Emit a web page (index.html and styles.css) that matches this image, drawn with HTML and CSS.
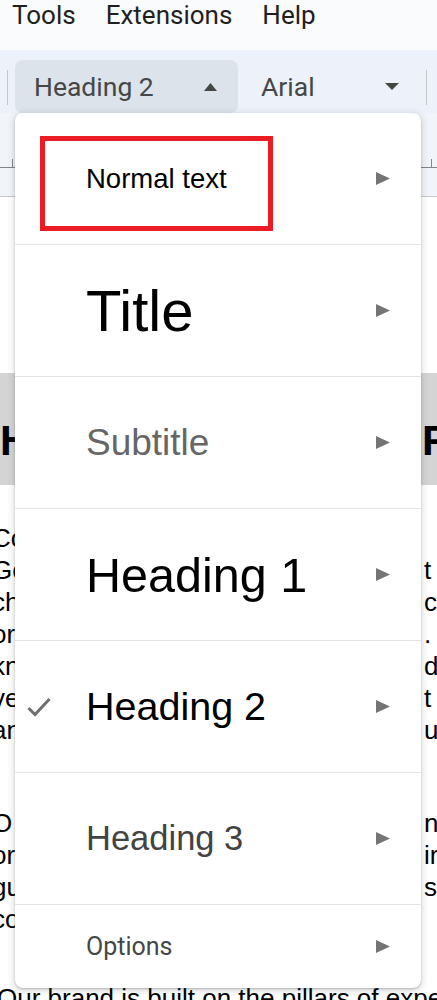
FILE: index.html
```html
<!DOCTYPE html>
<html lang="en">
<head>
<meta charset="utf-8">
<title>Docs styles menu</title>
<link rel="stylesheet" href="styles.css">
</head>
<body>
<div class="menubar"><span>Tools</span><span>Extensions</span><span>Help</span></div>
<div class="toolbar">
  <span class="sep"></span>
  <div class="style-btn"><span>Heading 2</span><svg class="tri" width="13" height="8" viewBox="0 0 13 8"><polygon points="0,8 6.5,0 13,8" fill="#444746"/></svg></div>
  <div class="font-btn"><span>Arial</span><svg class="tri" width="14" height="7" viewBox="0 0 14 7"><polygon points="0,0 14,0 7,7" fill="#444746"/></svg></div>
  <span class="sep"></span>
</div>
<div class="ruler"><div class="ticks"><i></i><i></i></div></div>
<div class="doc">
  <div class="band row"><span class="l">How We Present Ourselves</span><span class="r">F</span></div>
  <div class="para p1">
    <div class="row"><span class="l">Consistency in how we communicate matters.</span><span class="r"></span></div>
    <div class="row"><span class="l">Good communication builds trust and lets us reach</span><span class="r">t</span></div>
    <div class="row"><span class="l">choosing the right words for each audience we reach</span><span class="r">ch</span></div>
    <div class="row"><span class="l">or partner, every single time we speak to them.</span><span class="r">.</span></div>
    <div class="row"><span class="l">known and respected for clear, helpful and kind</span><span class="r">d</span></div>
    <div class="row"><span class="l">very same voice in every channel and every place that</span><span class="r">t</span></div>
    <div class="row"><span class="l">and format we use to share our work with you</span><span class="r">u</span></div>
  </div>
  <div class="para p2">
    <div class="row"><span class="l">O ur guidelines describe the tone we use when we plan</span><span class="r">n</span></div>
    <div class="row"><span class="l">or write content, from short notes to longer third</span><span class="r">ir</span></div>
    <div class="row"><span class="l">guides, so that our readers always find answers</span><span class="r">s</span></div>
    <div class="row"><span class="l">consistent and easy to follow.</span><span class="r"></span></div>
  </div>
  <div class="para p3">
    <div class="row"><span class="full">Our brand is built on the pillars of expertise and care.</span></div>
  </div>
</div>

<div class="menu">
  <div class="item">
    <span class="chk"></span><span class="label normal">Normal text</span>
    <svg class="arrow" width="14" height="13" viewBox="0 0 14 13"><polygon points="0,0 14,6.5 0,13" fill="#757575"/></svg>
    <span class="mark"></span>
  </div>
  <div class="item">
    <span class="chk"></span><span class="label title">Title</span>
    <svg class="arrow" width="14" height="13" viewBox="0 0 14 13"><polygon points="0,0 14,6.5 0,13" fill="#757575"/></svg>
  </div>
  <div class="item">
    <span class="chk"></span><span class="label subtitle">Subtitle</span>
    <svg class="arrow" width="14" height="13" viewBox="0 0 14 13"><polygon points="0,0 14,6.5 0,13" fill="#757575"/></svg>
  </div>
  <div class="item">
    <span class="chk"></span><span class="label h1">Heading 1</span>
    <svg class="arrow" width="14" height="13" viewBox="0 0 14 13"><polygon points="0,0 14,6.5 0,13" fill="#757575"/></svg>
  </div>
  <div class="item">
    <span class="chk"><svg width="24" height="20" viewBox="0 0 24 20"><polyline points="1.5,11 8,17.5 22.5,2" fill="none" stroke="#6f6f6f" stroke-width="3"/></svg></span><span class="label h2">Heading 2</span>
    <svg class="arrow" width="14" height="13" viewBox="0 0 14 13"><polygon points="0,0 14,6.5 0,13" fill="#757575"/></svg>
  </div>
  <div class="item">
    <span class="chk"></span><span class="label h3">Heading 3</span>
    <svg class="arrow" width="14" height="13" viewBox="0 0 14 13"><polygon points="0,0 14,6.5 0,13" fill="#757575"/></svg>
  </div>
  <div class="item opt">
    <span class="chk"></span><span class="label options">Options</span>
    <svg class="arrow" width="14" height="13" viewBox="0 0 14 13"><polygon points="0,0 14,6.5 0,13" fill="#757575"/></svg>
  </div>
</div>
</body>
</html>
```
FILE: styles.css
```css
* { box-sizing: border-box; }
html, body { margin: 0; padding: 0; height: 1000px; overflow: hidden; }
body {
  width: 437px;
  position: relative;
  background: #fff;
  font-family: Roboto, "Liberation Sans", Arial, sans-serif;
}

.menubar {
  height: 50px;
  background: #f9fbfd;
  display: flex;
  gap: 30px;
  padding-left: 12px;
  font-size: 26px;
  line-height: 30px;
  color: #1f1f1f;
}

.toolbar {
  height: 63px;
  background: #edf2fa;
  display: flex;
  padding: 10px 0 0 7px;
}
.sep {
  width: 1px;
  height: 35px;
  margin-top: 10px;
  background: #c4c7c5;
  flex: none;
}
.style-btn, .font-btn {
  height: 53px;
  display: flex;
  align-items: center;
  justify-content: space-between;
  font-size: 26.5px;
  color: #444746;
  flex: none;
}
.style-btn {
  margin-left: 7px;
  width: 223px;
  background: #dde3ea;
  border-radius: 8px;
  padding: 0 21px 0 19px;
}
.font-btn {
  width: 188px;
  padding: 0 27px 0 23px;
}
.tri { display: block; }

.ruler {
  height: 84px;
  background: #f1f4f9;
  border-bottom: 1px solid #c7c7c7;
  padding-top: 46px;
}
.ticks {
  display: flex;
  justify-content: space-between;
  padding: 0 5px 0 12px;
  height: 9px;
  border-bottom: 1px solid #80868b;
}
.ticks i { width: 1px; height: 8px; background: #80868b; display: block; }

.doc {
  padding-top: 176px;
  font-family: "Liberation Sans", Arial, sans-serif;
  color: #000;
}
.row {
  display: flex;
  white-space: nowrap;
  overflow: hidden;
  margin-left: -3px;
  width: 440px;
}
.row .l { width: 423px; flex: none; overflow: hidden; }
.row .r { flex: none; padding-left: 4px; }
.p1 .row, .p2 .row { margin-left: -8px; width: 445px; }
.p1 .row .l, .p2 .row .l { width: 428px; }
.band {
  height: 112px;
  background: #d4d4d4;
  padding-top: 47px;
  font-size: 42px;
  line-height: 42px;
  font-weight: bold;
  margin-left: 0;
  width: 437px;
}
.band .l { width: 420px; }
.band .r { padding-left: 2px; }
.para { font-size: 26px; line-height: 32px; }
.p1 { margin-top: 37px; }
.p2 { margin-top: 61px; }
.p3 { margin-top: 47px; }

.menu {
  position: absolute;
  top: 113px;
  left: 15px;
  width: 406px;
  height: 875px;
  background: #fff;
  border-radius: 8px;
  box-shadow: 0 2px 6px 2px rgba(60, 64, 67, 0.15), 0 1px 2px rgba(60, 64, 67, 0.3);
  display: flex;
  flex-direction: column;
  font-family: "Liberation Sans", Arial, sans-serif;
}
.item {
  height: 132px;
  flex: none;
  border-bottom: 1px solid #e3e3e3;
  display: flex;
  align-items: center;
  padding: 0 31px 0 12px;
  position: relative;
}
.item.opt { height: 83px; border-bottom: none; }
.chk { width: 59px; flex: none; display: flex; align-items: center; }
.chk svg { display: block; }
.label { flex: 1; white-space: nowrap; }
.arrow { display: block; flex: none; }
.mark {
  position: absolute;
  left: 25px;
  top: 23px;
  width: 233px;
  height: 95px;
  border: 5px solid #ec1c24;
}

.normal { font-size: 27.5px; color: #000; }
.title { font-size: 58px; color: #000; }
.subtitle { font-size: 37px; color: #666; }
.h1 { font-size: 48.5px; color: #000; }
.h2 { font-size: 39.5px; color: #000; }
.h3 { font-size: 34.5px; color: #434343; }
.options { font-family: Roboto, "Liberation Sans", sans-serif; font-size: 25px; color: #444746; }
```
